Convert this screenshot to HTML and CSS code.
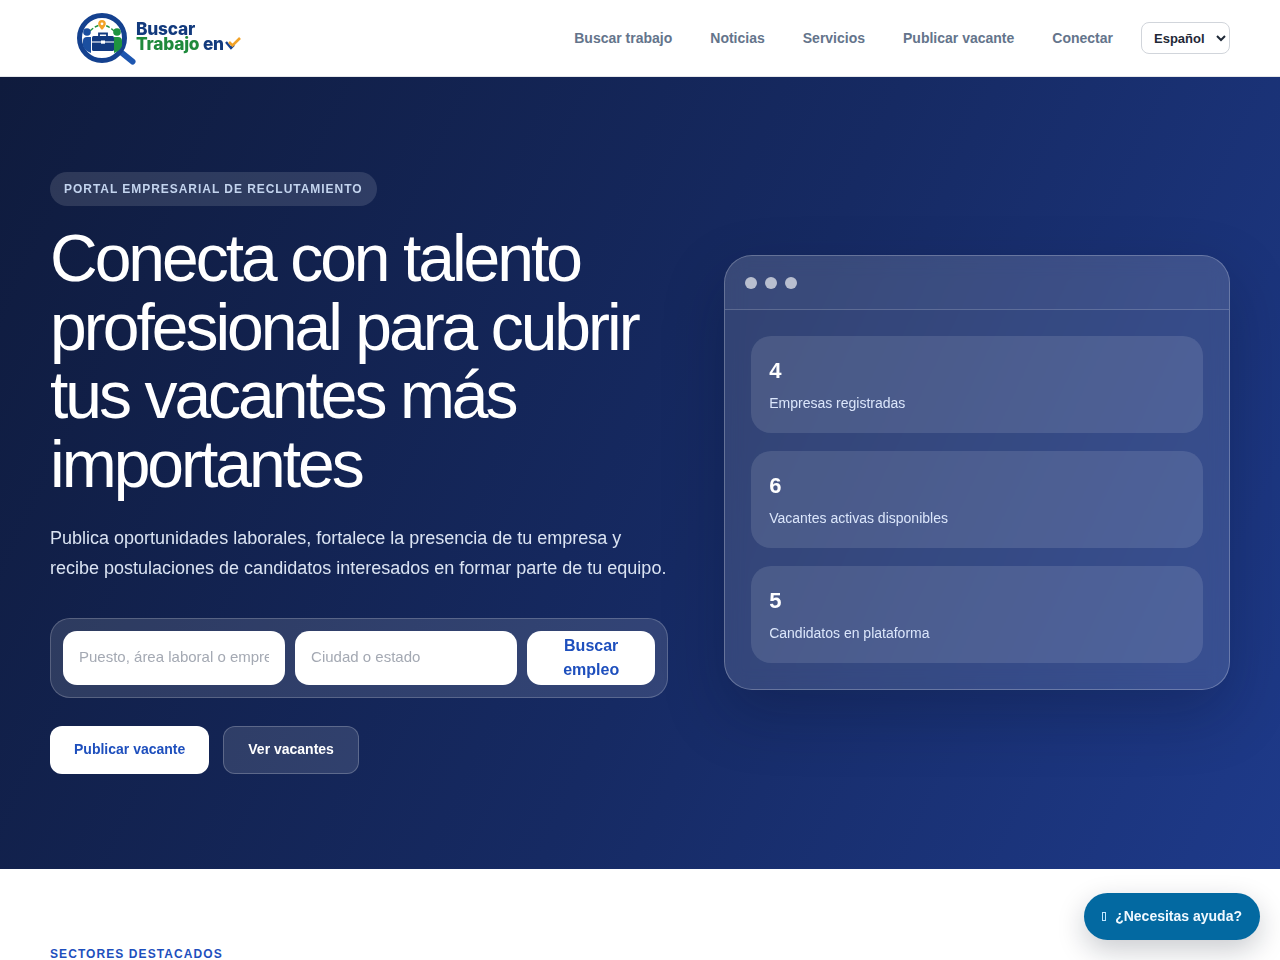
FILE: index.html
```html
<!DOCTYPE html>
<html lang="es">
<head>
<meta charset="utf-8">
<title>Buscar Trabajo en</title>
<link rel="stylesheet" href="styles.css">
</head>
<body>
<header class="navbar">
    <a class="logo" href="#">
        <svg class="logo-mark" width="64" height="60" viewBox="74 8 64 60">
            <path d="M122 53 L132.5 61.5" stroke="#1d56b0" stroke-width="6" stroke-linecap="round"/>
            <circle cx="102" cy="38" r="22.5" fill="#fff" stroke="#14418f" stroke-width="5"/>
            <path d="M90 31 Q102 19 114 31" fill="none" stroke="#1f9440" stroke-width="1.4" stroke-dasharray="4 2"/>
            <path d="M102 20 a3.8 3.8 0 0 1 3.8 3.8 c0 2.6 -3.8 6.2 -3.8 6.2 s-3.8 -3.6 -3.8 -6.2 A3.8 3.8 0 0 1 102 20z" fill="#f2a227"/>
            <circle cx="102" cy="23.8" r="1.4" fill="#fff"/>
            <circle cx="87" cy="32" r="3.8" fill="#1b4fa0"/>
            <path d="M83 46 V41 Q83 37 87 37 H91 V53 Q85 51 83 46z" fill="#1b4fa0"/>
            <circle cx="117" cy="32" r="3.8" fill="#1f9440"/>
            <path d="M122 46 V41 Q122 37 118 37 H114 V53 Q120 51 122 46z" fill="#1f9440"/>
            <rect x="92" y="36" width="22" height="15" rx="1.5" fill="#123a80"/>
            <path d="M99 36 V33.5 H107 V36" fill="none" stroke="#123a80" stroke-width="1.8"/>
            <path d="M92 42 H114" stroke="#fff" stroke-width="1.1"/>
            <rect x="101" y="40.5" width="4" height="3.2" fill="#fff"/>
        </svg>
        <span class="logo-text">
            <span class="logo-top">Buscar</span>
            <span class="logo-bottom"><span class="logo-green">Trabajo</span> en<svg class="logo-check" width="17" height="14" viewBox="0 0 17 14"><path d="M1 5 L6 11 L9 8" fill="none" stroke="#14418f" stroke-width="2.4"/><path d="M4 5 L7.5 8.5 L15 1" fill="none" stroke="#f2a227" stroke-width="2.6"/></svg></span>
        </span>
    </a>
    <nav class="nav-links">
        <a href="#">Buscar trabajo</a>
        <a href="#">Noticias</a>
        <a href="#">Servicios</a>
        <a href="#">Publicar vacante</a>
        <a href="#">Conectar</a>
        <select class="lang-select">
            <option>Español</option>
        </select>
    </nav>
</header>

<section class="hero">
    <div class="hero-copy">
        <span class="badge">PORTAL EMPRESARIAL DE RECLUTAMIENTO</span>
        <h1>Conecta con talento profesional para cubrir tus vacantes más importantes</h1>
        <p class="lead">Publica oportunidades laborales, fortalece la presencia de tu empresa y recibe postulaciones de candidatos interesados en formar parte de tu equipo.</p>
        <form class="search-box">
            <input type="text" placeholder="Puesto, área laboral o empresa">
            <input type="text" placeholder="Ciudad o estado">
            <button type="button">Buscar empleo</button>
        </form>
        <div class="hero-actions">
            <a class="btn btn-white" href="#">Publicar vacante</a>
            <a class="btn btn-ghost" href="#">Ver vacantes</a>
        </div>
    </div>
    <div class="panel">
        <div class="panel-head">
            <span class="dot"></span>
            <span class="dot"></span>
            <span class="dot"></span>
        </div>
        <div class="panel-body">
            <div class="stat">
                <strong>4</strong>
                <span>Empresas registradas</span>
            </div>
            <div class="stat">
                <strong>6</strong>
                <span>Vacantes activas disponibles</span>
            </div>
            <div class="stat">
                <strong>5</strong>
                <span>Candidatos en plataforma</span>
            </div>
        </div>
    </div>
</section>

<section class="sectors">
    <div class="eyebrow">SECTORES DESTACADOS</div>
</section>

<a class="help-btn" href="#"><span class="help-icon"></span>¿Necesitas ayuda?</a>
</body>
</html>
```

FILE: styles.css
```css
* {
  box-sizing: border-box;
}

body {
  margin: 0;
  font-family: "Liberation Sans", Arial, sans-serif;
  color: #1f2937;
  background: #fff;
  overflow-x: hidden;
}

a {
  text-decoration: none;
}

.navbar {
  display: flex;
  align-items: center;
  justify-content: space-between;
  height: 77px;
  padding: 0 50px 0 74px;
  background: #fff;
  border-bottom: 1px solid #e5e7eb;
}

.logo {
  display: flex;
  align-items: center;
  filter: blur(0.4px);
}

.logo-mark {
  display: block;
}

.logo-text {
  display: flex;
  flex-direction: column;
  margin: -4px 0 0 -2px;
  font-family: Inter, "Liberation Sans", sans-serif;
  font-weight: 800;
  font-size: 17.3px;
  line-height: 15px;
  color: #123a7d;
  letter-spacing: -0.2px;
}

.logo-green {
  color: #1f8a3c;
}

.logo-check {
  margin-left: 1px;
  vertical-align: -1px;
}

.nav-links {
  display: flex;
  align-items: center;
  gap: 38px;
}

.nav-links a {
  color: #64748b;
  font-size: 14px;
  font-weight: 700;
}

.lang-select {
  width: 89px;
  height: 32px;
  margin-left: -10px;
  padding: 0 8px;
  border: 1px solid #d1d5db;
  border-radius: 8px;
  background: #fff;
  color: #1f2937;
  font-family: "Liberation Sans", Arial, sans-serif;
  font-size: 13px;
  font-weight: 700;
}

.hero {
  display: grid;
  grid-template-columns: 1.1fr 0.9fr;
  gap: 56px;
  align-items: center;
  padding: 95px 50px;
  background: linear-gradient(115deg, #0f1b3d 0%, #162a63 55%, #1e3a8a 100%);
}

.hero-copy {
  will-change: transform;
}

.badge {
  display: inline-block;
  height: 34px;
  padding: 11px 14px;
  border-radius: 17px;
  background: rgba(255, 255, 255, 0.125);
  color: #c3d4ee;
  font-size: 12px;
  line-height: 12px;
  font-weight: 700;
  letter-spacing: 0.96px;
}

h1 {
  margin: 18px 0 0;
  color: #fff;
  font-size: 66px;
  line-height: 68.64px;
  font-weight: 400;
  letter-spacing: -3px;
}

.lead {
  margin: 24px 0 0;
  color: #dae3f2;
  font-size: 18px;
  line-height: 30px;
}

.search-box {
  display: grid;
  grid-template-columns: 1fr 1fr 128px;
  gap: 10px;
  margin-top: 35px;
  padding: 12px;
  border: 1px solid rgba(255, 255, 255, 0.2);
  border-radius: 20px;
  background: rgba(255, 255, 255, 0.12);
}

.search-box input {
  width: 100%;
  min-width: 0;
  height: 54px;
  padding: 0 16px 2px;
  border: 0;
  border-radius: 14px;
  background: #fff;
  font-family: "Liberation Sans", Arial, sans-serif;
  font-size: 15px;
}

.search-box input::placeholder {
  color: #a4a9b3;
}

.search-box button {
  height: 54px;
  padding: 0 16px;
  border: 0;
  border-radius: 14px;
  background: #fff;
  color: #1e4fbd;
  font-family: "Liberation Sans", Arial, sans-serif;
  font-size: 16px;
  line-height: 24px;
  font-weight: 700;
}

.hero-actions {
  display: flex;
  gap: 14px;
  margin-top: 28px;
}

.btn {
  display: block;
  height: 48px;
  padding: 0 24px;
  border-radius: 12px;
  font-size: 14px;
  line-height: 46px;
  font-weight: 700;
}

.btn-white {
  background: #fff;
  color: #1e4fbd;
}

.btn-ghost {
  background: rgba(255, 255, 255, 0.12);
  border: 1px solid rgba(255, 255, 255, 0.22);
  color: #fff;
  line-height: 44px;
}

.panel {
  border: 1px solid rgba(255, 255, 255, 0.25);
  border-radius: 28px;
  background: rgba(255, 255, 255, 0.125);
  box-shadow: 0 24px 60px rgba(8, 15, 40, 0.25);
  overflow: hidden;
  backdrop-filter: blur(10px);
}

.panel-head {
  display: flex;
  align-items: center;
  gap: 8px;
  height: 54px;
  padding: 0 20px;
  border-bottom: 1px solid rgba(255, 255, 255, 0.18);
  background: rgba(255, 255, 255, 0.03);
}

.dot {
  width: 12px;
  height: 12px;
  border-radius: 50%;
  background: rgba(255, 255, 255, 0.65);
}

.panel-body {
  display: flex;
  flex-direction: column;
  gap: 18px;
  padding: 26px;
}

.stat {
  height: 97px;
  padding: 18px;
  border-radius: 20px;
  background: rgba(255, 255, 255, 0.115);
}

.stat strong {
  display: block;
  color: #fff;
  font-size: 22px;
  line-height: 33px;
}

.stat span {
  display: block;
  margin-top: 6px;
  color: #dbe6fb;
  font-size: 14px;
  line-height: 20px;
}

.sectors {
  padding: 78px 50px 60px;
  background: #fff;
}

.eyebrow {
  color: #1e4fbd;
  font-size: 12px;
  line-height: 14px;
  font-weight: 700;
  letter-spacing: 1.08px;
}

.help-btn {
  position: fixed;
  right: 20px;
  bottom: 20px;
  display: flex;
  align-items: center;
  gap: 9px;
  height: 47px;
  padding: 0 18px 1px;
  border-radius: 24px;
  background: #0369a1;
  color: #f0f9ff;
  font-size: 14px;
  font-weight: 700;
  box-shadow: 0 10px 28px rgba(15, 23, 42, 0.22);
}

.help-icon {
  width: 4px;
  height: 9px;
  border: 1px solid #bfe6ff;
}
```
